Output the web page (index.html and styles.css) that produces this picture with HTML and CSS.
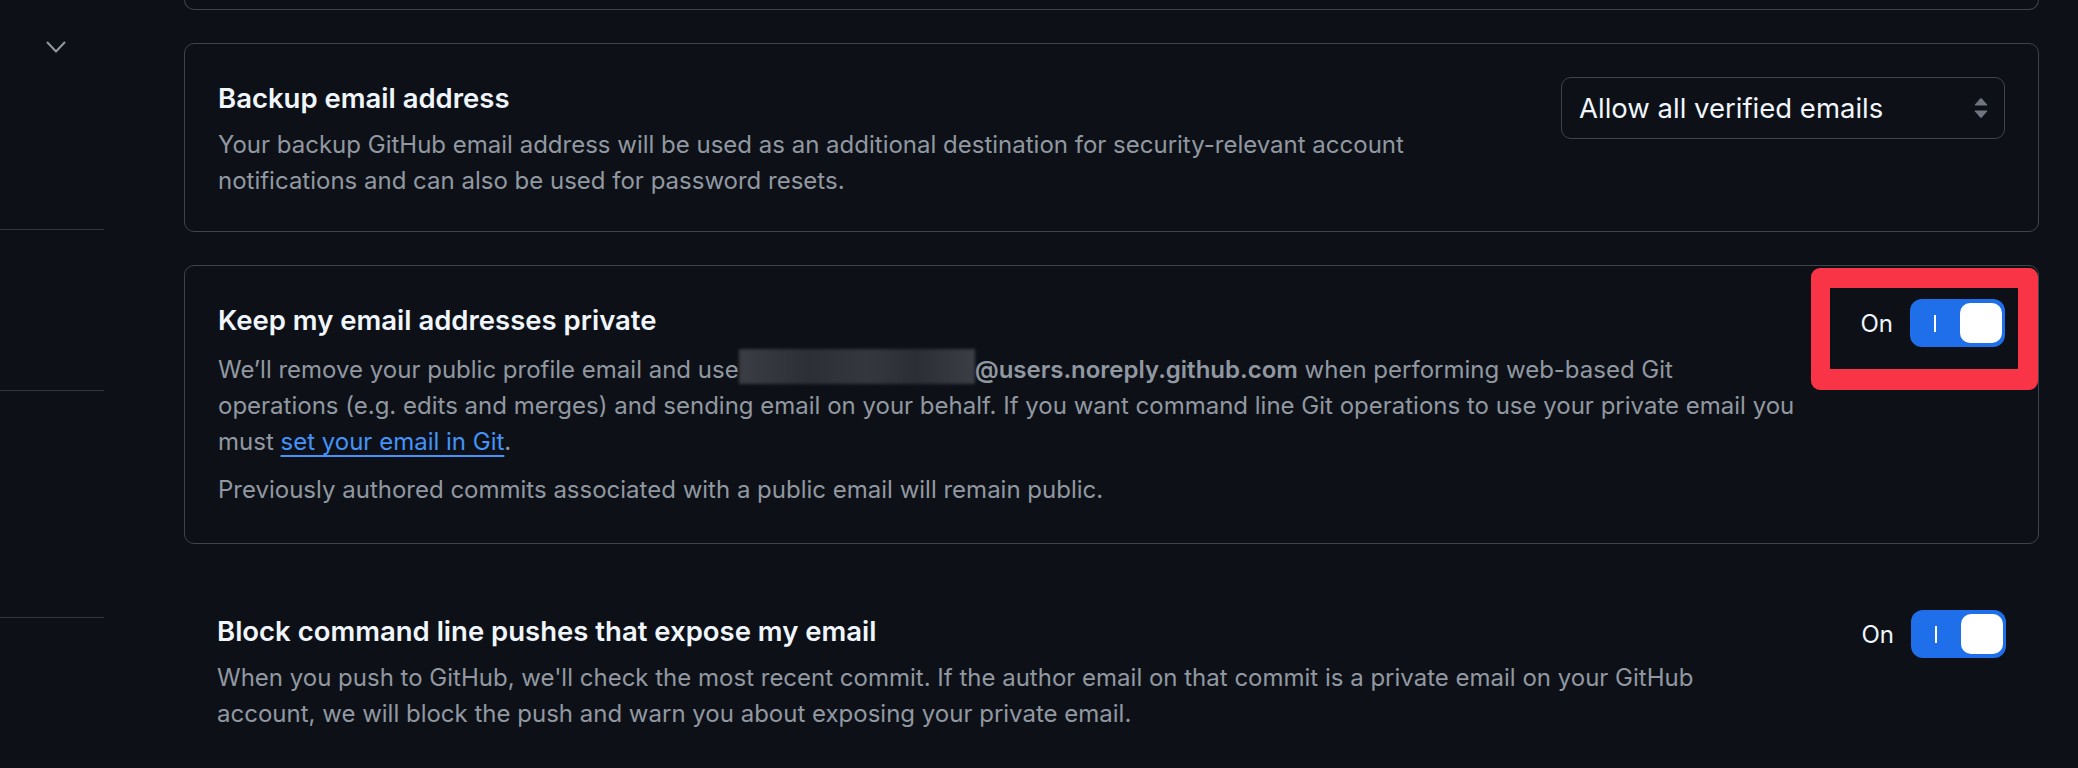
FILE: index.html
```html
<!DOCTYPE html>
<html lang="en">
<head>
    <meta charset="UTF-8">
    <meta name="viewport" content="width=device-width, initial-scale=1.0">
    <title>Emails</title>
    <link rel="stylesheet" href="styles.css">
</head>
<body>
    <div class="layout">
        <aside class="sidebar">
            <div class="nav-group nav-group-first">
                <svg class="nav-chevron" width="20" height="12" viewBox="0 0 20 12" aria-hidden="true">
                    <polyline points="1.5,1.5 10,10.5 18.5,1.5" fill="none" stroke="#9198a1" stroke-width="2" stroke-linecap="round" stroke-linejoin="round"/>
                </svg>
            </div>
            <div class="nav-group nav-group-second"></div>
            <div class="nav-group nav-group-third"></div>
        </aside>

        <main class="content">
            <div class="box box-tail"></div>

            <div class="box setting">
                <div class="setting-text">
                    <h3 class="setting-title">Backup email address</h3>
                    <p class="setting-desc setting-desc-short">Your backup GitHub email address will be used as an additional destination for security-relevant account notifications and can also be used for password resets.</p>
                </div>
                <div class="select">
                    <span>Allow all verified emails</span>
                    <svg class="select-arrows" width="14" height="20" viewBox="0 0 14 20" aria-hidden="true">
                        <path d="M6.2 0.6 L0.8 6.8 Q0.4 7.6 1.3 7.6 H12.7 Q13.6 7.6 13.2 6.8 L7.8 0.6 Q7 -0.2 6.2 0.6 Z" fill="#6e7681"/>
                        <path d="M6.2 19.4 L0.8 13.2 Q0.4 12.4 1.3 12.4 H12.7 Q13.6 12.4 13.2 13.2 L7.8 19.4 Q7 20.2 6.2 19.4 Z" fill="#6e7681"/>
                    </svg>
                </div>
            </div>

            <div class="box setting">
                <div class="setting-text">
                    <h3 class="setting-title">Keep my email addresses private</h3>
                    <p class="setting-desc">We’ll remove your public profile email and use<span class="redacted"></span><strong>@users.noreply.github.com</strong> when performing web-based Git operations (e.g. edits and merges) and sending email on your behalf. If you want command line Git operations to use your private email you must <a href="#">set your email in Git</a>.</p>
                    <p class="setting-desc setting-note">Previously authored commits associated with a public email will remain public.</p>
                </div>
                <div class="toggle-group">
                    <span class="toggle-label">On</span>
                    <button class="toggle" aria-pressed="true"><span class="toggle-line"></span><span class="toggle-knob"></span></button>
                    <div class="highlight"></div>
                </div>
            </div>

            <div class="setting setting-plain">
                <div class="setting-text">
                    <h3 class="setting-title">Block command line pushes that expose my email</h3>
                    <p class="setting-desc">When you push to GitHub, we'll check the most recent commit. If the author email on that commit is a private email on your GitHub account, we will block the push and warn you about exposing your private email.</p>
                </div>
                <div class="toggle-group">
                    <span class="toggle-label">On</span>
                    <button class="toggle" aria-pressed="true"><span class="toggle-line"></span><span class="toggle-knob"></span></button>
                </div>
            </div>
        </main>
    </div>
</body>
</html>
```

FILE: styles.css
```css
:root {
    --bg: #0d1117;
    --border: #3d444d;
    --fg: #f0f6fc;
    --fg-muted: #9198a1;
    --accent: #4493f8;
    --toggle-on: #1f6feb;
}

body {
    margin: 0;
    height: 768px;
    overflow: hidden;
    background: var(--bg);
    color: var(--fg);
    font-family: 'Inter', 'Noto Sans', sans-serif;
}

.layout {
    display: flex;
}

/* left navigation, mostly scrolled out of view */
.sidebar {
    width: 104px;
    flex-shrink: 0;
}

.nav-group {
    box-sizing: border-box;
    border-bottom: 1px solid #30363d;
}

.nav-group-first {
    height: 230px;
    padding: 41px 0 0 46px;
}

.nav-chevron {
    display: block;
}

.nav-group-second {
    height: 161px;
}

.nav-group-third {
    height: 227px;
}

.content {
    width: 1855px;
    margin-left: 80px;
}

.box {
    box-sizing: border-box;
    border: 1px solid var(--border);
    border-radius: 10px;
}

.box-tail {
    height: 10px;
    border-top: none;
    border-radius: 0 0 10px 10px;
    margin-bottom: 33px;
}

.setting {
    display: flex;
    align-items: flex-start;
    padding: 33px 33px 32px;
    margin-bottom: 33px;
}

.setting-plain {
    padding-top: 33px;
}

.setting-text {
    flex: 1;
    min-width: 0;
}

.setting-title {
    margin: 0 0 8px;
    font-size: 27.5px;
    line-height: 42px;
    font-weight: 600;
}

.setting-desc {
    margin: 0;
    font-size: 24px;
    line-height: 36px;
    color: var(--fg-muted);
}

.setting-desc strong {
    font-weight: 600;
}

.setting-desc a {
    color: var(--accent);
    text-decoration: underline;
    text-decoration-thickness: 2px;
    text-underline-offset: 5px;
}

.setting-note {
    margin: 12px 0 3px;
}

/* blurred-out noreply address */
.redacted {
    display: inline-block;
    width: 236px;
    height: 35px;
    vertical-align: -6px;
    background: linear-gradient(90deg, #3a3d43 0%, #2c2f35 30%, #34373d 55%, #2b2e34 75%, #3b3e44 100%);
    filter: blur(1.5px);
}

.select {
    box-sizing: border-box;
    width: 444px;
    height: 62px;
    margin-left: 66px;
    padding: 0 16px 0 17px;
    display: flex;
    align-items: center;
    justify-content: space-between;
    border: 1px solid var(--border);
    border-radius: 10px;
    font-size: 27.5px;
    color: var(--fg);
}

.select-arrows {
    display: block;
}

.toggle-group {
    position: relative;
    display: flex;
    align-items: center;
    gap: 17px;
    margin-left: 66px;
}

.toggle-label {
    font-size: 24px;
    color: var(--fg);
}

.toggle {
    position: relative;
    width: 95px;
    height: 48px;
    padding: 0;
    border: none;
    border-radius: 12px;
    background: var(--toggle-on);
    cursor: pointer;
}

.toggle-line {
    position: absolute;
    left: 24px;
    top: 16px;
    width: 2px;
    height: 17px;
    background: #ffffff;
}

.toggle-knob {
    position: absolute;
    top: 4px;
    right: 3px;
    width: 42px;
    height: 40px;
    border-radius: 10px;
    background: #ffffff;
}

/* red annotation frame drawn around the first toggle */
.highlight {
    position: absolute;
    left: -49px;
    top: -31px;
    right: -33px;
    bottom: -43px;
    border: 20px solid #fa3447;
    border-width: 20px 20px 21px 19px;
    border-radius: 9px;
    pointer-events: none;
}
```
